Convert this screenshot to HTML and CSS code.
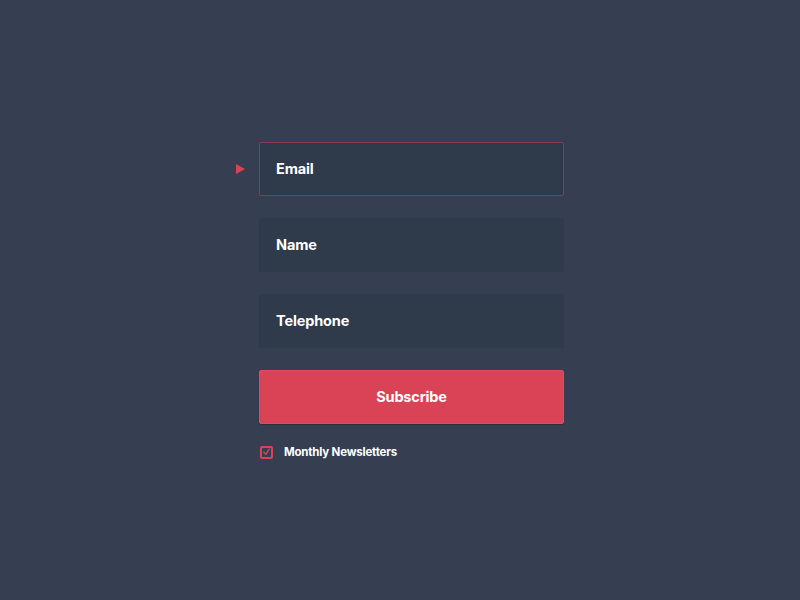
FILE: index.html
```html
<!DOCTYPE html>
<html>
<head>
<meta charset="utf-8">
<link rel="stylesheet" href="styles.css">
</head>
<body>
<form class="form">
  <div class="field field--active"><span class="marker"></span>Email</div>
  <div class="field">Name</div>
  <div class="field">Telephone</div>
  <div class="button">Subscribe</div>
  <label class="check">
    <span class="box"><svg width="10" height="10" viewBox="0 0 10 10"><path d="M2 5.2 L4.2 7.6 L8 1.8" fill="none" stroke="#d94355" stroke-width="1.6" stroke-linecap="round" stroke-linejoin="round"/></svg></span>
    Monthly Newsletters
  </label>
</form>
</body>
</html>
```
FILE: styles.css
```css
html, body {
  margin: 0;
  height: 100%;
  background: #353f51;
}
body {
  font-family: "Inter", "Open Sans", sans-serif;
  color: #fff;
}
.form {
  width: 305px;
  margin: 142px 0 0 259px;
  display: flex;
  flex-direction: column;
  gap: 22px;
}
.field {
  position: relative;
  box-sizing: border-box;
  height: 54px;
  padding: 0 0 2px 16px;
  display: flex;
  align-items: center;
  background: #2f3a4b;
  border: 1px solid #2f3a4b;
  border-radius: 2px;
  font-size: 14.5px;
  font-weight: 700;
  letter-spacing: -0.15px;
}
.field--active {
  border-color: #8a3a4d;
}
.marker {
  position: absolute;
  left: -24px;
  top: 21px;
  width: 0;
  height: 0;
  border-top: 5px solid transparent;
  border-bottom: 5px solid transparent;
  border-left: 9px solid #d94355;
}
.button {
  box-sizing: border-box;
  height: 54px;
  padding-bottom: 2px;
  display: flex;
  align-items: center;
  justify-content: center;
  background: #d94355;
  border: 1px solid #e04c5e;
  border-radius: 2px;
  box-shadow: 0 1px 1px rgba(0,0,0,0.25);
  font-size: 14.5px;
  font-weight: 700;
  letter-spacing: -0.15px;
}
.check {
  display: flex;
  align-items: center;
  gap: 11px;
  margin-top: -1px;
  padding-left: 1px;
  font-size: 11.5px;
  font-weight: 700;
  letter-spacing: -0.2px;
}
.box {
  box-sizing: border-box;
  width: 13px;
  height: 13px;
  border: 2px solid #d94355;
  border-radius: 2px;
  display: flex;
  align-items: center;
  justify-content: center;
}
```
